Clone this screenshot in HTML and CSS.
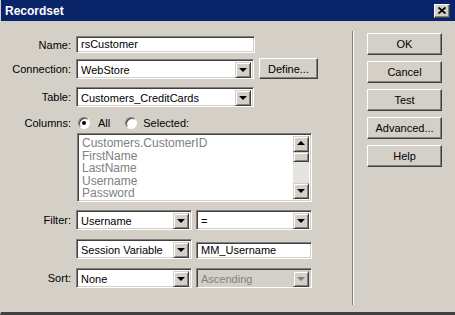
FILE: index.html
```html
<!DOCTYPE html>
<html lang="en">
<head>
  <meta charset="UTF-8" />
  <title>Recordset</title>
  <link rel="stylesheet" href="styles.css">
</head>
<body>
  <div class="window">
    <div class="titlebar">
      <span class="title">Recordset</span>
      <span class="close-btn">
        <svg width="8" height="7" viewBox="0 0 8 7"><path d="M0.5 0.5 L7.5 6.5 M7.5 0.5 L0.5 6.5" stroke="#000" stroke-width="1.8" fill="none"/></svg>
      </span>
    </div>

    <div class="dialog">
      <div class="form">
        <div class="row row-name">
          <label class="lbl">Name:</label>
          <div class="field text-input w-name">rsCustomer</div>
        </div>

        <div class="row row-conn">
          <label class="lbl">Connection:</label>
          <div class="field select w-long"><span class="val">WebStore</span><span class="drop"></span></div>
          <button class="btn btn-define">Define...</button>
        </div>

        <div class="row row-table">
          <label class="lbl">Table:</label>
          <div class="field select w-long"><span class="val">Customers_CreditCards</span><span class="drop"></span></div>
        </div>

        <div class="row row-cols">
          <label class="lbl">Columns:</label>
          <span class="radio checked"></span><span class="radio-text">All</span>
          <span class="radio radio-sel"></span><span class="radio-text">Selected:</span>
        </div>

        <div class="row row-list">
          <span class="lbl"></span>
          <div class="field listbox">
            <ul class="items">
              <li>Customers.CustomerID</li>
              <li>FirstName</li>
              <li>LastName</li>
              <li>Username</li>
              <li>Password</li>
            </ul>
            <div class="scrollbar">
              <span class="drop up"></span>
              <span class="thumb"></span>
              <span class="track"></span>
              <span class="drop"></span>
            </div>
          </div>
        </div>

        <div class="row row-filter">
          <label class="lbl">Filter:</label>
          <div class="field select w-half"><span class="val">Username</span><span class="drop"></span></div>
          <div class="field select w-half"><span class="val">=</span><span class="drop"></span></div>
        </div>

        <div class="row row-session">
          <span class="lbl"></span>
          <div class="field select w-half"><span class="val">Session Variable</span><span class="drop"></span></div>
          <div class="field text-input w-half mm">MM_Username</div>
        </div>

        <div class="row row-sort">
          <label class="lbl">Sort:</label>
          <div class="field select w-half"><span class="val">None</span><span class="drop"></span></div>
          <div class="field select w-half disabled"><span class="val">Ascending</span><span class="drop"></span></div>
        </div>
      </div>

      <div class="separator"></div>

      <div class="buttons">
        <button class="btn side">OK</button>
        <button class="btn side">Cancel</button>
        <button class="btn side">Test</button>
        <button class="btn side">Advanced...</button>
        <button class="btn side">Help</button>
      </div>
    </div>
  </div>
</body>
</html>
```

FILE: styles.css
```css
body {
  margin: 0;
  padding: 0;
  background: #d4d0c8;
  font-family: "Liberation Sans", Arial, sans-serif;
  font-size: 11px;
  color: #000;
}

.window {
  width: 455px;
  height: 315px;
  box-sizing: border-box;
  background: #d4d0c8;
  border-left: 1px solid #d4d0c8;
  border-bottom: 3px solid #404040;
  display: flex;
  flex-direction: column;
}

.titlebar {
  height: 21px;
  background: #0a246a;
  display: flex;
  align-items: center;
  justify-content: space-between;
  padding: 0 5px 0 4px;
  flex-shrink: 0;
}

.title {
  color: #fff;
  font-weight: bold;
  font-size: 12px;
}

.close-btn {
  width: 16px;
  height: 14px;
  box-sizing: border-box;
  background: #d4d0c8;
  border: 1px solid;
  border-color: #fff #404040 #404040 #fff;
  box-shadow: inset -1px -1px #808080;
  display: flex;
  align-items: center;
  justify-content: center;
}

.dialog {
  flex: 1;
  display: flex;
}

.form {
  width: 351px;
  padding-top: 15px;
}

.row {
  display: flex;
  align-items: center;
}

.lbl {
  width: 70px;
  flex-shrink: 0;
  text-align: right;
  margin-right: 5px;
}

.row-conn { margin-top: 5px; }
.row-table { margin-top: 8px; }
.row-cols { margin-top: 9px; height: 14px; }
.row-list { margin-top: 3px; }
.row-filter { margin-top: 8px; }
.row-session { margin-top: 9px; }
.row-sort { margin-top: 9px; }

/* sunken fields */
.field {
  box-sizing: border-box;
  background: #fff;
  border: 1px solid;
  border-color: #808080 #fff #fff #808080;
  box-shadow: inset 1px 1px #404040, inset -1px -1px #d4d0c8;
}

.text-input {
  height: 17px;
  line-height: 15px;
  padding: 0 4px;
}

.w-name { width: 179px; }
.w-long { width: 178px; }
.w-half { width: 116px; margin-right: 4px; }

.mm {
  height: 17px;
  margin-top: 2px;
}

.select {
  height: 20px;
  padding: 2px;
  display: flex;
}

.val {
  flex: 1;
  line-height: 16px;
  padding-left: 2px;
  white-space: nowrap;
  overflow: hidden;
}

.select.disabled {
  background: #d4d0c8;
}

.select.disabled .val {
  color: #808080;
}

/* raised arrow button */
.drop {
  width: 16px;
  height: 16px;
  flex-shrink: 0;
  box-sizing: border-box;
  background: #d4d0c8;
  border: 1px solid;
  border-color: #d4d0c8 #404040 #404040 #d4d0c8;
  box-shadow: inset 1px 1px #fff, inset -1px -1px #808080;
  position: relative;
}

.drop::after {
  content: "";
  position: absolute;
  left: 3px;
  top: 5px;
  border-left: 4px solid transparent;
  border-right: 4px solid transparent;
  border-top: 4px solid #000;
}

.drop.up::after {
  border-top: none;
  border-bottom: 4px solid #000;
  top: 4px;
}

.disabled .drop::after {
  border-top-color: #808080;
}

.btn {
  box-sizing: border-box;
  background: #d4d0c8;
  border: 1px solid;
  border-color: #fff #404040 #404040 #fff;
  box-shadow: inset -1px -1px #808080;
  font-family: inherit;
  font-size: 11px;
  color: #000;
  padding: 0;
}

.btn-define {
  width: 59px;
  height: 21px;
  margin-left: 5px;
}

/* radios */
.radio {
  width: 12px;
  height: 12px;
  box-sizing: border-box;
  border-radius: 50%;
  background: #fff;
  border: 1px solid;
  border-color: #808080 #fff #fff #808080;
  box-shadow: inset 1px 1px #404040;
  margin-left: 2px;
  position: relative;
}

.radio.checked::after {
  content: "";
  position: absolute;
  left: 3px;
  top: 3px;
  width: 4px;
  height: 4px;
  border-radius: 50%;
  background: #000;
}

.radio-text {
  margin-left: 8px;
}

.radio-sel {
  margin-left: 15px;
}

.radio-sel + .radio-text {
  margin-left: 6px;
}

/* list box */
.listbox {
  width: 235px;
  height: 69px;
  margin-left: 1px;
  padding: 2px;
  display: flex;
}

.items {
  flex: 1;
  list-style: none;
  margin: 0;
  padding: 1px 0 0 2px;
  color: #808080;
  font-size: 12px;
}

.items li {
  line-height: 12.6px;
}

.scrollbar {
  width: 16px;
  display: flex;
  flex-direction: column;
}

.thumb {
  height: 10px;
  box-sizing: border-box;
  background: #d4d0c8;
  border: 1px solid;
  border-color: #d4d0c8 #404040 #404040 #d4d0c8;
  box-shadow: inset 1px 1px #fff, inset -1px -1px #808080;
}

.track {
  flex: 1;
  background: #e6e4df;
}

.separator {
  width: 1px;
  border-left: 1px solid #808080;
  background: #fff;
  margin: 10px 0 7px;
}

.buttons {
  padding: 12px 0 0 13px;
  display: flex;
  flex-direction: column;
  gap: 6px;
}

.btn.side {
  width: 75px;
  height: 22px;
}
```
